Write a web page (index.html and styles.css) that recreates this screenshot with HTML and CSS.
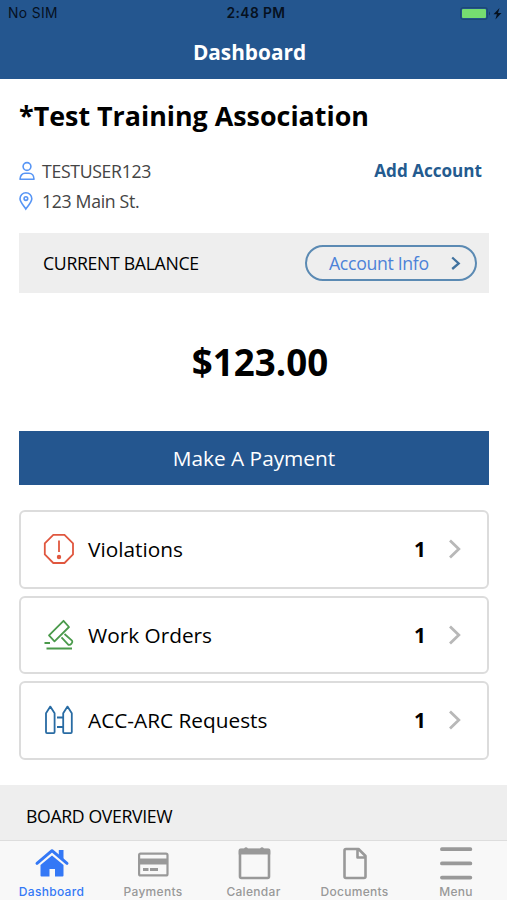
FILE: index.html
```html
<!DOCTYPE html>
<html lang="en">
<head>
<meta charset="utf-8">
<title>Dashboard</title>
<link rel="stylesheet" href="styles.css">
</head>
<body>
<header class="top">
  <div class="status">
    <span class="carrier">No SIM</span>
    <span class="clock">2:48 PM</span>
    <svg class="battery" width="44" height="14" viewBox="0 0 44 14"><rect x=".7" y=".7" width="26.600" height="11.600" rx="2.500" fill="none" stroke="#1d4774" stroke-width="1.200"/><rect x="2" y="2" width="24" height="9" rx="1" fill="#76dc70"/><path d="M29 4.500q2 2 0 4z" fill="#173b62"/><path d="M39.500 1 33.500 7.200h3.400l-1.500 5.300L41.500 6H38z" fill="#06111f"/></svg>
  </div>
  <h1 class="title">Dashboard</h1>
</header>
<main class="content">
  <h2 class="association">*Test Training Association</h2>
  <section class="account">
    <div class="details">
      <div class="detail"><svg width="16" height="20" viewBox="0 0 16 20" fill="none" stroke="#5795f5" stroke-width="1.600"><circle cx="8" cy="5.500" r="3.900"/><path d="M1 18.200c0-3.600 2.400-6 5-6h4c2.800 0 5 2.400 5 6z" stroke-linejoin="round"/></svg><span class="user">TESTUSER123</span></div>
      <div class="detail"><svg width="16" height="20" viewBox="0 0 16 20" fill="none" stroke="#5795f5" stroke-width="1.600"><path d="M6.800 18C4.500 14.500 1 10.800 1 7.700a5.900 5.900 0 0 1 11.800 0c0 3.100-3.500 6.800-6 10.300z"/><circle cx="6.900" cy="7.600" r="1.800"/></svg><span class="address">123 Main St.</span></div>
    </div>
    <a class="add">Add Account</a>
  </section>
  <section class="balance">
    <span class="balance-label">CURRENT BALANCE</span>
    <a class="info"><span class="info-text">Account Info</span><svg width="10" height="14" viewBox="0 0 10 14" fill="none" stroke="#41729f" stroke-width="2.300"><path d="M1.200 1.500 7.700 7.500l-6.500 5.500"/></svg></a>
  </section>
  <p class="amount">$123.00</p>
  <a class="pay"><span>Make A Payment</span></a>
  <div class="cards">
    <a class="card">
      <svg class="card-icon" width="32" height="32" viewBox="0 0 32 32" fill="none" stroke="#e0573f" stroke-width="1.800"><path d="M10.300 1.800h11.200l8.500 8.500v11.200L21.500 30H10.300l-8.500-8.500V10.300z"/><path d="M16 7.500v11.500"/><circle cx="16" cy="24" r="1.300" fill="#e0573f"/></svg>
      <span class="card-name violations">Violations</span><b class="count">1</b>
      <svg class="chevron" width="14" height="22" viewBox="0 0 14 22"><path d="M2 2.500 10.800 11 2 19.500"/></svg>
    </a>
    <a class="card">
      <svg class="card-icon" width="32" height="32" viewBox="0 0 32 32" fill="none" stroke="#4a9a4b" stroke-width="1.800" stroke-linejoin="round"><path d="M20.500 1.800 6 16.300l5.500 6L26 8z"/><path d="M18.500 18.300l7 7.500q1.500.5 3-1.200t.5-3L21.500 15"/><path d="M1.500 24h5.500M3.500 29.500h25.500"/></svg>
      <span class="card-name orders">Work Orders</span><b class="count">1</b>
      <svg class="chevron" width="14" height="22" viewBox="0 0 14 22"><path d="M2 2.500 10.800 11 2 19.500"/></svg>
    </a>
    <a class="card">
      <svg class="card-icon" width="32" height="32" viewBox="0 0 32 32" fill="none" stroke="#286ba3" stroke-width="1.800" stroke-linejoin="round"><path d="M7.300 2.600 3 9.300v18.800q0 1 1 1h6.600q1 0 1-1V9.300zM24.500 2.600l-4.300 6.700v18.800q0 1 1 1h6.600q1 0 1-1V9.300z"/><path d="M14 13.500h6M14 23h6"/></svg>
      <span class="card-name requests">ACC-ARC Requests</span><b class="count">1</b>
      <svg class="chevron" width="14" height="22" viewBox="0 0 14 22"><path d="M2 2.500 10.800 11 2 19.500"/></svg>
    </a>
  </div>
</main>
<section class="board"><span>BOARD OVERVIEW</span></section>
<nav class="tabs">
  <a class="tab active"><svg width="36" height="36" viewBox="0 0 36 36"><path d="M3 17.300 18 4.700 33 17.300" fill="none" stroke="#3478f6" stroke-width="3" stroke-linecap="round" stroke-linejoin="round"/><path d="M24.800 4h4.700v9.500l-4.700-4zM6.500 19 18 9.500 29.500 19v10.500q0 1-1 1h-7.500v-7.500h-5.500v7.500H7.500q-1 0-1-1z" fill="#3478f6"/></svg><span>Dashboard</span></a>
  <a class="tab"><svg width="36" height="36" viewBox="0 0 36 36"><rect x="4.100" y="7.600" width="28.400" height="21.800" rx="1.500" fill="none" stroke="#999" stroke-width="2.200"/><path d="M4 12.500h29v6H4zM8 22h5.500v3H8zM15 22h8v3h-8z" fill="#999"/></svg><span>Payments</span></a>
  <a class="tab"><svg width="36" height="36" viewBox="0 0 36 36"><rect x="4" y="4" width="29" height="28" rx="1.500" fill="none" stroke="#999" stroke-width="2.600"/><path d="M2.700 4q0-1.500 1.500-1.500H8q2-2.500 4 0h12q2-2.500 4 0h4.800q1.500 0 1.500 1.500v4.500H2.700z" fill="#999"/></svg><span>Calendar</span></a>
  <a class="tab"><svg width="36" height="36" viewBox="0 0 36 36" fill="none" stroke="#999" stroke-width="2.600"><path d="M21.500 3H9q-1.500 0-1.500 1.500v26q0 1.500 1.500 1.500h18q1.500 0 1.500-1.500V10zM20.500 4v7.500h8" stroke-linejoin="round"/></svg><span>Documents</span></a>
  <a class="tab"><svg width="36" height="36" viewBox="0 0 36 36" fill="none" stroke="#999" stroke-width="3.700" stroke-linecap="round"><path d="M3.900 3.200h28.500M3.900 17.400h28.500M3.900 31.600h28.500"/></svg><span>Menu</span></a>
</nav>
</body>
</html>
```

FILE: styles.css
```css
* { box-sizing: border-box; }
body { margin: 0; width: 507px; height: 900px; overflow: hidden; display: flex; flex-direction: column; background: #fff; color: #000; font-family: "Open Sans", sans-serif; white-space: nowrap; }
svg { display: block; flex: none; }
h1, h2, p { margin: 0; }
.top { height: 79px; flex: none; background: #24568f; }
.status { display: grid; grid-template-columns: 1fr auto 1fr; align-items: center; height: 27px; padding: 0 3px 0 8px; font: 13.800px/27px Inter, sans-serif; letter-spacing: .4px; color: #06111f; }
.clock { font-weight: 600; }
.battery { justify-self: end; }
.title { text-align: center; color: #fff; font-size: 20.800px; line-height: 50px; padding-right: 8px; }
.content { flex: none; padding: 0 18px 0 19px; height: 706px; }
.association { font-size: 26.850px; line-height: 36px; padding-top: 19px; }
.account { display: flex; justify-content: space-between; margin-top: 22px; height: 77px; padding-right: 7px; }
.detail { display: flex; align-items: center; gap: 7px; height: 30px; color: #444; font-size: 17.700px; letter-spacing: -.33px; }
.add { color: #245b8f; font-weight: 700; font-size: 17.100px; line-height: 30px; }
.balance { display: flex; justify-content: space-between; align-items: center; height: 60px; background: #eee; padding: 0 12px 0 24px; font-size: 17.700px; letter-spacing: -.33px; }
.info { width: 172px; height: 36px; border: 2px solid #5b8ab3; border-radius: 18px; display: flex; align-items: center; justify-content: space-between; padding: 0 14px 0 22px; color: #4c82d8; }
.amount { text-align: center; font-size: 36.700px; line-height: 139px; height: 138px; font-weight: 700; padding-left: 12px; }
.pay { display: flex; align-items: center; justify-content: center; height: 54px; background: #24568f; color: #fff; font-size: 20.800px; }
.cards { margin-top: 25px; display: grid; gap: 7px; }
.card { height: 78.500px; display: flex; align-items: center; border: 2px solid #dcdcdc; border-radius: 6px; padding: 0 25px 0 22px; font-size: 20.800px; }
.card-name { flex: 1; padding-left: 13px; }
.count { margin-right: 22px; }
.chevron { fill: none; stroke: #b8b8b8; stroke-width: 2.800; }
.board { height: 55px; flex: none; background: #eee; padding-left: 26px; font-size: 17.700px; letter-spacing: -.38px; line-height: 62px; }
.tabs { height: 60px; flex: none; display: grid; grid-template-columns: 103px 100px 101px 101px 102px; background: #f8f8f8; border-top: 1px solid #ddd; color: #999; font: 500 12px/14px Inter, sans-serif; letter-spacing: .3px; }
.tab { display: flex; flex-direction: column; align-items: center; padding-top: 5px; gap: 3px; }
.active { color: #3478f6; }
```
